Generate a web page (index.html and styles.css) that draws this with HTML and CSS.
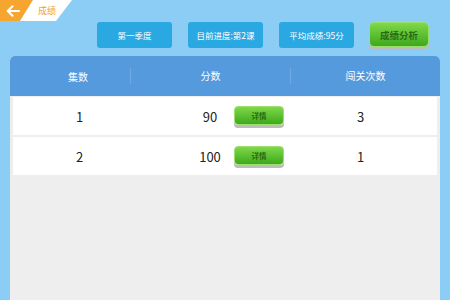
FILE: index.html
```html
<!DOCTYPE html>
<html lang="zh">
<head>
  <meta charset="UTF-8">
  <title>成绩</title>
  <link rel="stylesheet" href="styles.css">
</head>
<body>

<div class="page">
  <div class="tab">
    <div class="tab-back">
      <svg width="14" height="12" viewBox="0 0 14 12">
        <path d="M13 6H2M6.5 1.2L1.7 6l4.8 4.8" fill="none" stroke="#fff" stroke-width="2" stroke-linecap="round" stroke-linejoin="round"/>
      </svg>
    </div>
    <div class="tab-title">成绩</div>
  </div>

  <div class="toolbar">
    <div class="info-btn">第一季度</div>
    <div class="info-btn">目前进度:第2课</div>
    <div class="info-btn">平均成绩:95分</div>
    <button class="green-btn big-btn">成绩分析</button>
  </div>

  <div class="panel">
    <div class="head">
      <div class="cell col1">集数</div>
      <div class="cell col2 divided">分数</div>
      <div class="cell col3 divided">闯关次数</div>
    </div>

    <div class="row">
      <div class="cell col1">1</div>
      <div class="cell col2 score">
        <span class="num">90</span>
        <button class="green-btn small-btn">详情</button>
      </div>
      <div class="cell col3">3</div>
    </div>

    <div class="row">
      <div class="cell col1">2</div>
      <div class="cell col2 score">
        <span class="num">100</span>
        <button class="green-btn small-btn">详情</button>
      </div>
      <div class="cell col3">1</div>
    </div>
  </div>
</div>

</body>
</html>
```

FILE: styles.css
```css
body {
  margin: 0;
  background: #8ccdf6;
  font-family: "Noto Sans CJK SC", "Noto Sans", sans-serif;
  overflow: hidden;
}

.page {
  width: 450px;
  height: 300px;
  display: flex;
  flex-direction: column;
}

/* top-left title tab */
.tab {
  display: flex;
  height: 21px;
}

.tab-back {
  width: 33px;
  background: #f6a62f;
  clip-path: polygon(0 0, 33px 0, 20px 21px, 0 21px);
  display: flex;
  align-items: center;
  padding-left: 6px;
  box-sizing: border-box;
}

.tab-title {
  width: 52px;
  margin-left: -13px;
  background: #fff;
  clip-path: polygon(13px 0, 52px 0, 36px 21px, 0 21px);
  color: #f0a23a;
  font-size: 9px;
  line-height: 21px;
  padding-left: 18px;
  box-sizing: border-box;
}

/* buttons row */
.toolbar {
  display: flex;
  align-items: flex-start;
  gap: 16px;
  margin: 1px 0 0 97px;
  height: 34px;
}

.info-btn {
  width: 75px;
  height: 26px;
  background: #2aa8e2;
  border-radius: 3px;
  color: #fff;
  font-size: 8.5px;
  line-height: 26px;
  text-align: center;
}

.green-btn {
  border: 1px solid #9be06a;
  background: linear-gradient(#7fd84a, #3ea81c);
  color: #2c6a12;
  font-family: inherit;
  padding: 0;
  cursor: pointer;
  box-shadow: 0 3px 0 #bcbcbc;
}

.big-btn {
  width: 60px;
  height: 25px;
  margin-left: -1px;
  border-radius: 5px;
  font-size: 9.5px;
  font-weight: bold;
}

.small-btn {
  width: 50px;
  height: 19px;
  border-radius: 4px;
  font-size: 7.5px;
  font-weight: bold;
}

/* table */
.panel {
  flex: 1;
  margin: 0 10px;
  background: #eeeeee;
  border-radius: 5px 5px 0 0;
  overflow: hidden;
}

.head,
.row {
  display: grid;
  grid-template-columns: 120px 160px 1fr;
  align-items: center;
}

.head {
  height: 40px;
  background: #569ade;
  color: #fff;
  font-size: 10px;
  margin-bottom: 1px;
}

.row {
  height: 38px;
  margin: 0 3px 2px;
  background: #fff;
  color: #222;
  font-size: 13px;
  grid-template-columns: 117px 160px 1fr;
}

.cell {
  text-align: center;
}

.head .col1,
.row .col1 {
  padding-left: 16px;
}

.row .col3 {
  padding-right: 6px;
}

.head .divided {
  border-left: 1px solid #74abdf;
  line-height: 16px;
}

.score {
  display: grid;
  align-items: center;
}

.score .num,
.score .small-btn {
  grid-area: 1 / 1;
}

.score .num {
  justify-self: center;
}

.score .small-btn {
  justify-self: start;
  margin: -2px 0 0 104px;
}
```
